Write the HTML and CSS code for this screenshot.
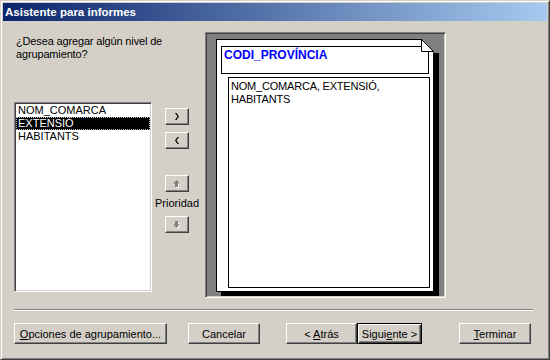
FILE: index.html
```html
<!DOCTYPE html>
<html lang="es">
<head>
    <meta charset="UTF-8">
    <title>Asistente para informes</title>
    <link rel="stylesheet" href="styles.css">
</head>
<body>
    <div class="window">
        <div class="titlebar">Asistente para informes</div>
        <div class="body">
            <div class="top">
                <div class="left">
                    <p class="prompt">¿Desea agregar algún nivel de<br>agrupamiento?</p>
                    <div class="picker">
                        <ul class="listbox">
                            <li>NOM_COMARCA</li>
                            <li class="selected">EXTENSIÓ</li>
                            <li>HABITANTS</li>
                        </ul>
                        <div class="movers">
                            <button class="btn small">
                                <svg width="4" height="7" viewBox="0 0 4 7"><path d="M0 0h1.5l2.5 3.5-2.5 3.5h-1.5l2.5-3.5z" fill="#000"/></svg>
                            </button>
                            <button class="btn small">
                                <svg width="4" height="7" viewBox="0 0 4 7"><path d="M4 0h-1.5l-2.5 3.5 2.5 3.5h1.5l-2.5-3.5z" fill="#000"/></svg>
                            </button>
                            <button class="btn small up">
                                <svg width="8" height="8" viewBox="0 0 8 8">
                                    <path d="M4.5 1 8 4.5H6V8H3V4.5H1z" fill="#fff"/>
                                    <path d="M3.5 0 7 3.5H5V7H2V3.5H0z" fill="#808080"/>
                                </svg>
                            </button>
                            <span class="prio">Prioridad</span>
                            <button class="btn small">
                                <svg width="8" height="8" viewBox="0 0 8 8">
                                    <path d="M4.5 8 8 4.5H6V1H3v3.5H1z" fill="#fff"/>
                                    <path d="M3.5 7 7 3.5H5V0H2v3.5H0z" fill="#808080"/>
                                </svg>
                            </button>
                        </div>
                    </div>
                </div>
                <div class="preview">
                    <div class="page">
                        <div class="group-head">CODI_PROVÍNCIA</div>
                        <div class="detail">NOM_COMARCA, EXTENSIÓ,<br>HABITANTS</div>
                        <svg class="fold" width="18" height="14" viewBox="0 0 18 14">
                            <path d="M1 0H18V14H13z" fill="#808080"/>
                            <path d="M0.5 0.5V12.5H12.5z" fill="#fff" stroke="#000"/>
                        </svg>
                    </div>
                </div>
            </div>
            <div class="separator"></div>
            <div class="actions">
                <button class="btn options"><span><u>O</u>pciones de agrupamiento...</span></button>
                <button class="btn cancel">Cancelar</button>
                <button class="btn back"><span>&lt; <u>A</u>trás</span></button>
                <button class="btn next default"><span>Sigui<u>e</u>nte &gt;</span></button>
                <button class="btn finish"><span><u>T</u>erminar</span></button>
            </div>
        </div>
    </div>
</body>
</html>
```

FILE: styles.css
```css
body {
    margin: 0;
    background: #d4d0c8;
    font-family: "Liberation Sans", Arial, sans-serif;
    font-size: 11px;
    color: #000;
}
.window {
    width: 550px;
    height: 360px;
    box-sizing: border-box;
    border: 1px solid;
    border-color: #d4d0c8 #404040 #404040 #d4d0c8;
    box-shadow: inset 1px 1px #fff, inset -1px -1px #808080;
    padding: 2px;
    background: #d4d0c8;
}
.titlebar {
    height: 18px;
    line-height: 18px;
    padding-left: 2px;
    background: linear-gradient(to right, #0a246a, #a6caf0);
    color: #fff;
    font-weight: bold;
    font-size: 11.5px;
}
.body {
    padding: 11px 0 0 11px;
}
.top {
    display: flex;
    height: 266px;
}
.left {
    width: 191px;
}
.prompt {
    margin: 3px 0 0 2px;
    line-height: 13px;
    letter-spacing: -0.15px;
}
.picker {
    display: flex;
    gap: 13px;
    margin-top: 41px;
}
.listbox {
    list-style: none;
    margin: 0;
    padding: 1px;
    width: 138px;
    height: 190px;
    box-sizing: border-box;
    background: #fff;
    border: 1px solid;
    border-color: #808080 #fff #fff #808080;
    box-shadow: inset 1px 1px #404040, inset -1px -1px #d4d0c8;
}
.listbox li {
    height: 13px;
    line-height: 13px;
    padding-left: 2px;
}
.listbox .selected {
    background: #000;
    color: #fff;
    outline: 1px dotted #c0c0c0;
    outline-offset: -1px;
}
.movers {
    display: flex;
    flex-direction: column;
    align-items: center;
    width: 24px;
    padding-top: 6px;
}
.btn {
    box-sizing: border-box;
    display: flex;
    align-items: center;
    justify-content: center;
    padding: 0;
    background: #d4d0c8;
    border: 1px solid;
    border-color: #fff #404040 #404040 #fff;
    box-shadow: inset -1px -1px #808080;
    font: inherit;
    color: #000;
}
.btn.small {
    width: 24px;
    height: 17px;
    flex: none;
    margin-bottom: 7px;
}
.btn.up {
    margin-top: 19px;
    margin-bottom: 5px;
}
.prio {
    white-space: nowrap;
    line-height: 13px;
    margin-bottom: 6px;
}
.preview {
    width: 241px;
    height: 266px;
    box-sizing: border-box;
    background: #808080;
    border: 1px solid;
    border-color: #808080 #fff #fff #808080;
    box-shadow: inset 1px 1px #404040, inset -1px -1px #d4d0c8;
    padding: 6px 0 0 10px;
}
.page {
    position: relative;
    width: 218px;
    height: 253px;
    box-sizing: border-box;
    background: #fff;
    border: 1px solid #000;
    box-shadow: 5px 4px 0 #000;
}
.group-head {
    box-sizing: border-box;
    width: 208px;
    height: 28px;
    margin: 6px 0 0 4px;
    padding: 1px 2px;
    border: 1px solid #000;
    color: #0000ff;
    font-weight: bold;
    font-size: 12px;
    line-height: 14px;
}
.detail {
    box-sizing: border-box;
    width: 202px;
    height: 211px;
    margin: 3px 0 0 11px;
    padding: 2px 2px;
    border: 1px solid #000;
    line-height: 13px;
    letter-spacing: -0.2px;
}
.fold {
    position: absolute;
    top: -1px;
    left: 204px;
}
.separator {
    width: 519px;
    height: 0;
    margin-top: 11px;
    border-top: 1px solid #808080;
    border-bottom: 1px solid #fff;
}
.actions {
    display: flex;
    margin-top: 12px;
}
.actions .btn {
    height: 21px;
    width: 72px;
    white-space: pre;
}
.actions .options {
    width: 153px;
}
.actions .cancel {
    margin-left: 21px;
}
.actions .back {
    margin-left: 26px;
    width: 71px;
}
.actions .next {
    width: 65px;
}
.actions .finish {
    margin-left: 37px;
}
.btn.default {
    border-color: #000;
    box-shadow: inset 1px 1px #fff, inset -1px -1px #404040, inset -2px -2px #808080;
}
```
